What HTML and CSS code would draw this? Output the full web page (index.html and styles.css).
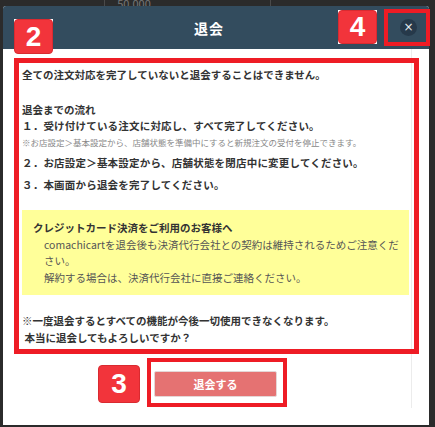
FILE: index.html
```html
<!DOCTYPE html>
<html lang="ja">
<head>
  <meta charset="UTF-8" />
  <meta name="viewport" content="width=device-width, initial-scale=1.0"/>
  <title>退会</title>
  <link rel="stylesheet" href="styles.css">
</head>
<body>
  <div class="bg-row">
    <div class="bg-cell first"></div>
    <div class="bg-cell mid">50,000</div>
    <div class="bg-cell"></div>
  </div>

  <div class="modal">
    <div class="modal-header">
      <div class="modal-title">退会</div>
      <button class="close-btn">×</button>
    </div>
    <div class="modal-body">
      <div class="scroll">
        <p class="lead">全ての注文対応を完了していないと退会することはできません。</p>
        <p class="flow-title">退会までの流れ</p>
        <p class="step">１．受け付けている注文に対応し、すべて完了してください。</p>
        <p class="note">※お店設定＞基本設定から、店舗状態を準備中にすると新規注文の受付を停止できます。</p>
        <p class="step spaced">２．お店設定＞基本設定から、店舗状態を閉店中に変更してください。</p>
        <p class="step spaced">３．本画面から退会を完了してください。</p>

        <div class="notice">
          <p class="notice-title">クレジットカード決済をご利用のお客様へ</p>
          <div class="notice-text">
            <p>comachicartを退会後も決済代行会社との契約は維持されるためご注意ください。</p>
            <p>解約する場合は、決済代行会社に直接ご連絡ください。</p>
          </div>
        </div>

        <p class="warning">※一度退会するとすべての機能が今後一切使用できなくなります。<br>&nbsp;本当に退会してもよろしいですか？</p>

        <div class="actions">
          <button class="leave-btn">退会する</button>
        </div>
      </div>
    </div>
  </div>

  <!-- annotation marks over the screenshot -->
  <div class="mark frame-body"></div>
  <div class="mark frame-close"></div>
  <div class="mark frame-button"></div>
  <div class="badge badge-2"><span>2</span></div>
  <div class="badge badge-4"><span>4</span></div>
  <div class="badge badge-3"><span>3</span></div>
</body>
</html>
```

FILE: styles.css
```css
body {
  margin: 0;
  padding: 0;
  height: 427px;
  overflow: hidden;
  background: #2b2b2b;
  font-family: "Noto Sans CJK JP", "Noto Sans", sans-serif;
  position: relative;
}

p {
  margin: 0;
}

.bg-row {
  display: flex;
  height: 6px;
  overflow: hidden;
}

.bg-cell {
  width: 155px;
  border-left: 1px solid #4a4a4a;
  color: #777;
  font-size: 11px;
  line-height: 6px;
  padding-left: 12px;
}

.bg-cell.first {
  width: 106px;
  border-left: none;
  padding-left: 0;
}

.modal {
  margin: 0 6px 0 3px;
  height: 419px;
  background: #fff;
  border-radius: 3px 3px 0 0;
  display: flex;
  flex-direction: column;
}

.modal-header {
  height: 43px;
  background: #334c5e;
  border-radius: 3px 3px 0 0;
  display: flex;
  align-items: center;
  padding: 0 12px 0 15px;
}

.modal-title {
  flex: 1;
  text-align: center;
  color: #fff;
  font-size: 14px;
  font-weight: 700;
  letter-spacing: 1px;
}

.close-btn {
  width: 17px;
  height: 17px;
  padding: 0;
  border: none;
  border-radius: 50%;
  background: #26394a;
  color: #e8edf0;
  font-size: 12px;
  line-height: 17px;
  font-family: "DejaVu Sans", sans-serif;
}

.modal-body {
  flex: 1;
}

.scroll {
  width: 389px;
  border-right: 1px solid #ececec;
  padding: 17px 0 11px 19px;
  color: #333;
  font-size: 10.5px;
}

.lead {
  line-height: 18px;
  font-weight: 700;
}

.flow-title {
  margin-top: 18px;
  line-height: 16px;
  font-weight: 700;
}

.step {
  line-height: 16px;
  font-weight: 700;
  letter-spacing: 0.2px;
}

.step.spaced {
  margin-top: 6px;
}

.note {
  margin-top: 1px;
  line-height: 14px;
  font-size: 8.5px;
  color: #888;
}

.notice {
  margin-top: 17px;
  width: 387px;
  box-sizing: border-box;
  background: #ffff99;
  padding: 10px 8px 9px 11px;
  line-height: 16.5px;
}

.notice-title {
  font-weight: 700;
}

.notice-text {
  padding-left: 11px;
  color: #555;
}

.warning {
  margin-top: 18px;
  line-height: 16.5px;
  font-weight: 700;
}

.actions {
  width: 387px;
  display: flex;
  justify-content: center;
  margin-top: 25px;
}

.leave-btn {
  width: 123px;
  height: 26px;
  border: 1px solid #e4d6d6;
  border-radius: 2px;
  background: #e57272;
  color: #fff;
  font-family: "Noto Sans CJK JP", sans-serif;
  font-size: 11px;
  font-weight: 700;
}

.mark {
  position: absolute;
  box-sizing: border-box;
  border: 5px solid #ee1c25;
}

.frame-body {
  left: 14px;
  top: 58px;
  width: 405px;
  height: 296px;
}

.frame-close {
  left: 384px;
  top: 9px;
  width: 46px;
  height: 37px;
  border-width: 4px;
}

.frame-button {
  left: 147px;
  top: 358px;
  width: 140px;
  height: 49px;
  border-width: 4px;
}

.badge {
  position: absolute;
  background: #fff;
  display: flex;
}

.badge span {
  flex: 1;
  background: #f2343b;
  border-radius: 4px;
  border: 1px solid #d92a30;
  color: #fff;
  font-family: "Liberation Sans", Arial, sans-serif;
  font-weight: 700;
  font-size: 28px;
  display: flex;
  align-items: center;
  justify-content: center;
}

.badge-2 {
  left: 14px;
  top: 19px;
  width: 39px;
  height: 35px;
}

.badge-4 {
  left: 338px;
  top: 10px;
  width: 39px;
  height: 34px;
}

.badge-3 {
  left: 98px;
  top: 365px;
  width: 42px;
  height: 38px;
}
```
